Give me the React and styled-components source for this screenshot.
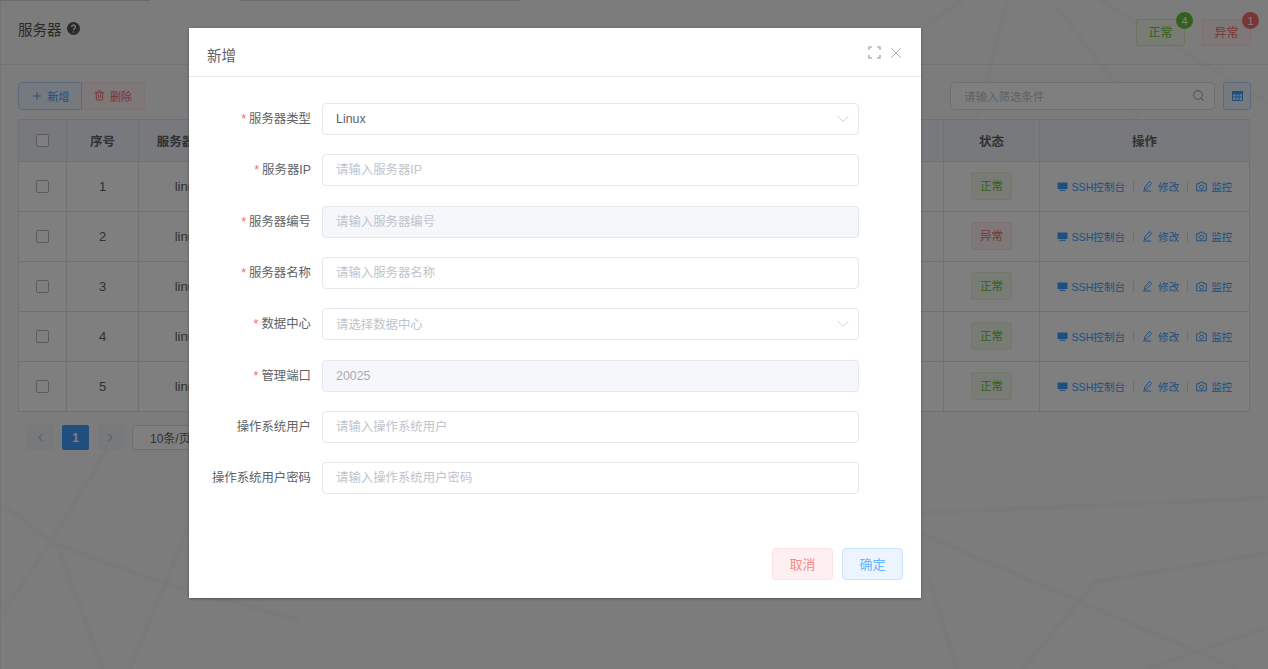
import React from "react";
import styled, { createGlobalStyle } from "styled-components";
import { Plus, Trash2, Search, ChevronDown, ChevronLeft, ChevronRight, X } from "lucide-react";

const GlobalStyle = createGlobalStyle`
  html, body {
    margin: 0;
    padding: 0;
    height: 100%;
    overflow: hidden;
  }
  * {
    box-sizing: border-box;
  }
  body {
    font-family: "Liberation Sans", "Noto Sans CJK SC", sans-serif;
    color: #606266;
  }
`;

// page behind the dialog
const Page = styled.div`
  position: relative;
  width: 1268px;
  height: 669px;
  background: #f8f8f8;
  box-shadow: inset 1px 0 0 #e6e8ee;
  overflow: hidden;
`;

const BackLines = styled.svg`
  position: absolute;
  left: 0;
  top: 0;
  width: 1268px;
  height: 669px;
  filter: blur(1px);
`;

const TopStrip = styled.div`
  position: relative;
  height: 1px;
  display: grid;
  grid-template-columns: 150px 90px 280px 1fr;
`;

const StripPart = styled.div`
  background: ${(p) => (p.$on ? "#d5d9e6" : "transparent")};
`;

const PageHeader = styled.div`
  position: relative;
  height: 64px;
  padding: 18px 17px 0 18px;
  display: flex;
  justify-content: space-between;
  border-bottom: 1px solid #e8e8e8;
`;

const PageTitle = styled.div`
  display: flex;
  align-items: center;
  gap: 5px;
  height: 20px;
  padding-bottom: 2px;
  font-size: 14.5px;
  color: #555;
`;

const HelpDot = styled.svg`
  width: 13px;
  height: 13px;
`;

const StatusGroup = styled.div`
  display: flex;
  gap: 17px;
`;

const StatusButton = styled.div`
  position: relative;
  width: 49px;
  height: 27px;
  padding-bottom: 2px;
  display: flex;
  align-items: center;
  justify-content: center;
  font-size: 12px;
  border-radius: 2px;
  color: ${(p) => (p.$bad ? "#f56c6c" : "#67c23a")};
  background: ${(p) => (p.$bad ? "#fef0f0" : "#f0f9eb")};
  border: 1px solid ${(p) => (p.$bad ? "#fde2e2" : "#d4edc4")};
`;

const Badge = styled.span`
  position: absolute;
  top: -8px;
  right: -9px;
  width: 17px;
  height: 17px;
  border-radius: 50%;
  display: flex;
  align-items: center;
  justify-content: center;
  font-size: 11px;
  color: #fff;
  background: ${(p) => (p.$bad ? "#f56c6c" : "#67c23a")};
`;

const Content = styled.div`
  position: relative;
  padding: 17px 17px 0 18px;
`;

const Toolbar = styled.div`
  display: flex;
  justify-content: space-between;
  height: 28px;
`;

const ActionGroup = styled.div`
  display: flex;
`;

const ToolButton = styled.div`
  width: ${(p) => (p.$bad ? "63px" : "64px")};
  height: 28px;
  padding-bottom: 1px;
  display: flex;
  align-items: center;
  justify-content: center;
  gap: 5px;
  font-size: 11px;
  color: ${(p) => (p.$bad ? "#f56c6c" : "#409eff")};
  background: ${(p) => (p.$bad ? "#fef0f0" : "#ecf5ff")};
  border: 1px solid ${(p) => (p.$bad ? "#fde2e2" : "#b3d8ff")};
  border-radius: ${(p) => (p.$bad ? "0 3px 3px 0" : "3px 0 0 3px")};
  ${(p) => (p.$bad ? "border-left: none;" : "")}
`;

const FilterGroup = styled.div`
  display: flex;
  gap: 8px;
`;

const SearchBox = styled.div`
  width: 265px;
  height: 28px;
  padding: 0 9px 1px 13px;
  display: flex;
  align-items: center;
  justify-content: space-between;
  font-size: 11.5px;
  color: #c0c4cc;
  background: #fff;
  border: 1px solid #dcdfe6;
  border-radius: 4px;
`;

const ColumnButton = styled.div`
  width: 28px;
  height: 28px;
  display: flex;
  align-items: center;
  justify-content: center;
  color: #409eff;
  background: #ecf5ff;
  border: 1px solid #b3d8ff;
  border-radius: 3px;
`;

const DataTable = styled.div`
  margin-top: 9px;
  width: 1232px;
  background: #fff;
  border: 1px solid #dfe3ea;
  border-bottom: none;
`;

const TableRow = styled.div`
  display: grid;
  grid-template-columns: 48px 72px 99px 706px 96px 1fr;
  height: ${(p) => (p.$head ? "42px" : "50px")};
  background: ${(p) => (p.$head ? "#eff3f9" : "#fff")};
  border-bottom: 1px solid #dfe3ea;
  font-size: ${(p) => (p.$head ? "12.5px" : "13px")};
  font-weight: ${(p) => (p.$head ? "700" : "400")};
  color: #606266;
`;

const Cell = styled.div`
  display: flex;
  align-items: center;
  justify-content: center;
  padding-bottom: 1px;
  white-space: nowrap;
  border-right: 1px solid #dfe3ea;
  &:last-child {
    border-right: none;
  }
`;

const CheckBox = styled.span`
  width: 13px;
  height: 13px;
  background: #fff;
  border: 1px solid #b5b9c1;
  border-radius: 2px;
`;

const StatusTag = styled.span`
  width: 41px;
  height: 28px;
  padding-bottom: 2px;
  display: flex;
  align-items: center;
  justify-content: center;
  font-size: 11.5px;
  border-radius: 3px;
  color: ${(p) => (p.$bad ? "#f56c6c" : "#67c23a")};
  background: ${(p) => (p.$bad ? "#fef0f0" : "#f0f9eb")};
  border: 1px solid ${(p) => (p.$bad ? "#fde2e2" : "#e1f3d8")};
`;

const OpLink = styled.span`
  display: inline-flex;
  align-items: center;
  gap: 4px;
  font-size: 10.6px;
  color: #409eff;
`;

const OpDivider = styled.span`
  width: 1px;
  height: 11px;
  margin: 0 8px;
  background: #dcdfe6;
`;

const Pager = styled.div`
  margin-top: 13px;
  padding-left: 9px;
  display: flex;
  align-items: center;
  gap: 8px;
  height: 25px;
`;

const PageBtn = styled.div`
  width: 27px;
  height: 25px;
  display: flex;
  align-items: center;
  justify-content: center;
  border-radius: 2px;
  font-size: 12px;
  font-weight: 700;
  color: ${(p) => (p.$active ? "#fff" : "#c0c4cc")};
  background: ${(p) => (p.$active ? "#409eff" : "#f0f2f5")};
`;

const PageSize = styled.div`
  width: 110px;
  height: 25px;
  padding-left: 17px;
  display: flex;
  align-items: center;
  font-size: 12px;
  color: #606266;
  background: #fff;
  border: 1px solid #dcdfe6;
  border-radius: 3px;
`;

// dialog
const Mask = styled.div`
  position: absolute;
  inset: 0;
  padding-top: 28px;
  padding-left: 189px;
  background: rgba(0, 0, 0, 0.5);
`;

const Dialog = styled.div`
  width: 732px;
  height: 570px;
  display: flex;
  flex-direction: column;
  background: #fff;
  box-shadow: 0 1px 3px rgba(0, 0, 0, 0.3);
`;

const DialogHead = styled.div`
  height: 49px;
  padding: 5px 16px 0 18px;
  display: flex;
  align-items: center;
  justify-content: space-between;
  font-size: 14.5px;
  color: #606266;
  border-bottom: 1px solid #e8eaf0;
`;

const HeadTools = styled.div`
  display: flex;
  align-items: center;
  gap: 6px;
  color: #909399;
  margin-top: -4px;
`;

const Form = styled.div`
  padding-top: 26px;
  display: flex;
  flex-direction: column;
  gap: 19.33px;
`;

const FormRow = styled.div`
  display: grid;
  grid-template-columns: 122px 537px;
  column-gap: 11px;
  align-items: center;
  height: 32px;
`;

const Label = styled.label`
  padding-bottom: 2px;
  text-align: right;
  font-size: 12.4px;
  color: #606266;
  white-space: nowrap;
`;

const Star = styled.span`
  color: #f56c6c;
  margin-right: 3px;
`;

const TextInput = styled.input`
  width: 537px;
  height: 32px;
  padding: 0 13px;
  font: inherit;
  font-size: 12.4px;
  color: #a8abb2;
  background: ${(p) => (p.disabled ? "#f5f7fa" : "#fff")};
  border: 1px solid #e4e7ed;
  border-radius: 4px;
  outline: none;
  &::placeholder {
    color: #c0c4cc;
    opacity: 1;
  }
`;

const SelectBox = styled.div`
  width: 537px;
  height: 32px;
  padding: 0 5px 0 13px;
  display: flex;
  align-items: center;
  justify-content: space-between;
  font-size: 12.4px;
  color: ${(p) => (p.$empty ? "#c0c4cc" : "#606266")};
  background: #fff;
  border: 1px solid #e4e7ed;
  border-radius: 4px;
`;

const DialogFoot = styled.div`
  margin-top: auto;
  padding: 0 18px 18px 0;
  display: flex;
  justify-content: flex-end;
  gap: 9px;
`;

const FootButton = styled.div`
  width: 61px;
  height: 32px;
  padding-bottom: 2px;
  display: flex;
  align-items: center;
  justify-content: center;
  font-size: 13px;
  border-radius: 4px;
  color: ${(p) => (p.$bad ? "#f78989" : "#66b1ff")};
  background: ${(p) => (p.$bad ? "#fef0f0" : "#ecf5ff")};
  border: 1px solid ${(p) => (p.$bad ? "#fde2e2" : "#c6e2ff")};
`;

const rows = [
  { id: 1, bad: false },
  { id: 2, bad: true },
  { id: 3, bad: false },
  { id: 4, bad: false },
  { id: 5, bad: false },
];

const fields = [
  { label: "服务器类型", req: true, select: true, value: "Linux" },
  { label: "服务器IP", req: true, hint: "请输入服务器IP" },
  { label: "服务器编号", req: true, hint: "请输入服务器编号", disabled: true },
  { label: "服务器名称", req: true, hint: "请输入服务器名称" },
  { label: "数据中心", req: true, select: true, hint: "请选择数据中心" },
  { label: "管理端口", req: true, value: "20025", disabled: true },
  { label: "操作系统用户", hint: "请输入操作系统用户" },
  { label: "操作系统用户密码", hint: "请输入操作系统用户密码" },
];

const lines = [
  "107,450 52,540 0,617",
  "7,507 52,543 160,582 300,620",
  "60,553 103,669",
  "187,530 130,669",
  "920,513 1268,498",
  "920,533 1237,669",
  "927,572 957,669",
  "1268,553 1095,582 1023,669",
  "1268,627 1147,669",
  "963,0 920,30",
  "1007,0 987,80 977,117",
  "1057,7 1113,80 1140,117",
  "1100,0 1268,103",
];

const MonitorIcon = () => (
  <svg width="11" height="11" viewBox="0 0 11 11">
    <rect x="0.5" y="1.5" width="10" height="6.5" fill="currentColor" />
    <rect x="2.5" y="8.7" width="6" height="1.2" fill="currentColor" />
  </svg>
);

const EditIcon = () => (
  <svg width="12" height="12" viewBox="0 0 12 12" fill="none" stroke="currentColor" strokeWidth="1">
    <path d="M7.5 1.5 L9.5 3.5 L4.5 9 L2.3 9.5 L2.8 7 Z" />
    <path d="M1 11 H9" />
  </svg>
);

const CameraIcon = () => (
  <svg width="11" height="11" viewBox="0 0 11 11" fill="none" stroke="currentColor" strokeWidth="1">
    <path d="M0.7 2.7 H3.3 L3.9 1.2 H7.1 L7.7 2.7 H10.3 V9.8 H0.7 Z" />
    <circle cx="5.5" cy="6.2" r="2" />
  </svg>
);

const ColumnsIcon = () => (
  <svg width="11" height="10" viewBox="0 0 11 10" fill="none" stroke="currentColor" strokeWidth="1">
    <rect x="0.5" y="0.5" width="10" height="9" />
    <rect x="0.5" y="0.5" width="10" height="2.5" fill="currentColor" />
    <path d="M0.5 6 H10.5 M4 3 V9.5 M7 3 V9.5" />
  </svg>
);

const ExpandIcon = () => (
  <svg width="13" height="13" viewBox="0 0 13 13" fill="none" stroke="currentColor" strokeWidth="1.1">
    <path d="M1 4 V1 H4 M9 1 H12 V4 M12 9 V12 H9 M4 12 H1 V9" />
  </svg>
);

const App = () => {
  return (
    <Page>
      <GlobalStyle />
      <BackLines viewBox="0 0 1268 669" fill="none" stroke="#efefef" strokeWidth="2">
        {lines.map((pts) => (
          <polyline key={pts} points={pts} />
        ))}
      </BackLines>
      <TopStrip>
        <StripPart $on />
        <StripPart />
        <StripPart $on />
        <StripPart />
      </TopStrip>
      <PageHeader>
        <PageTitle>
          服务器
          <HelpDot viewBox="0 0 13 13">
            <circle cx="6.5" cy="6.5" r="6.5" fill="#555" />
            <path d="M4.6 5 A1.9 1.9 0 1 1 7.4 6.6 C6.8 7 6.5 7.2 6.5 8" fill="none" stroke="#f8f8f8" strokeWidth="1.3" />
            <circle cx="6.5" cy="10" r="0.8" fill="#f8f8f8" />
          </HelpDot>
        </PageTitle>
        <StatusGroup>
          <StatusButton>
            正常
            <Badge>4</Badge>
          </StatusButton>
          <StatusButton $bad>
            异常
            <Badge $bad>1</Badge>
          </StatusButton>
        </StatusGroup>
      </PageHeader>
      <Content>
        <Toolbar>
          <ActionGroup>
            <ToolButton>
              <Plus size={12} />
              新增
            </ToolButton>
            <ToolButton $bad>
              <Trash2 size={11} />
              删除
            </ToolButton>
          </ActionGroup>
          <FilterGroup>
            <SearchBox>
              请输入筛选条件
              <Search size={13} color="#a8abb2" />
            </SearchBox>
            <ColumnButton>
              <ColumnsIcon />
            </ColumnButton>
          </FilterGroup>
        </Toolbar>
        <DataTable>
          <TableRow $head>
            <Cell>
              <CheckBox />
            </Cell>
            <Cell>序号</Cell>
            <Cell>服务器类型</Cell>
            <Cell />
            <Cell>状态</Cell>
            <Cell>操作</Cell>
          </TableRow>
          {rows.map((row) => (
            <TableRow key={row.id}>
              <Cell>
                <CheckBox />
              </Cell>
              <Cell>{row.id}</Cell>
              <Cell>linux</Cell>
              <Cell />
              <Cell>
                <StatusTag $bad={row.bad}>{row.bad ? "异常" : "正常"}</StatusTag>
              </Cell>
              <Cell>
                <OpLink>
                  <MonitorIcon />
                  SSH控制台
                </OpLink>
                <OpDivider />
                <OpLink>
                  <EditIcon />
                  修改
                </OpLink>
                <OpDivider />
                <OpLink>
                  <CameraIcon />
                  监控
                </OpLink>
              </Cell>
            </TableRow>
          ))}
        </DataTable>
        <Pager>
          <PageBtn>
            <ChevronLeft size={13} />
          </PageBtn>
          <PageBtn $active>1</PageBtn>
          <PageBtn>
            <ChevronRight size={13} />
          </PageBtn>
          <PageSize>10条/页</PageSize>
        </Pager>
      </Content>

      <Mask>
        <Dialog>
          <DialogHead>
            新增
            <HeadTools>
              <ExpandIcon />
              <X size={18} strokeWidth={1} />
            </HeadTools>
          </DialogHead>
          <Form>
            {fields.map((f) => (
              <FormRow key={f.label}>
                <Label>
                  {f.req && <Star>*</Star>}
                  {f.label}
                </Label>
                {f.select ? (
                  <SelectBox $empty={!f.value}>
                    {f.value || f.hint}
                    <ChevronDown size={20} strokeWidth={1} color="#c0c4cc" />
                  </SelectBox>
                ) : (
                  <TextInput placeholder={f.hint} defaultValue={f.value} disabled={f.disabled} />
                )}
              </FormRow>
            ))}
          </Form>
          <DialogFoot>
            <FootButton $bad>取消</FootButton>
            <FootButton>确定</FootButton>
          </DialogFoot>
        </Dialog>
      </Mask>
    </Page>
  );
};

export default App;
